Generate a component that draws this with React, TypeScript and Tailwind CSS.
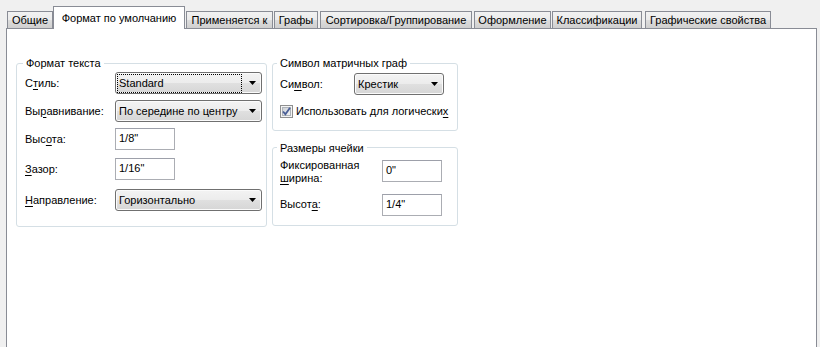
import React from "react";

const font = { fontFamily: '"Liberation Sans", Arial, sans-serif' };

function Arrow() {
  return (
    <svg width="7" height="4" viewBox="0 0 7 4" className="shrink-0">
      <path d="M0 0H7L3.5 4Z" fill="#000" />
    </svg>
  );
}

function Select({ w, text, focused }: { w: string; text: string; focused?: boolean }) {
  return (
    <div
      className={`flex h-[22px] ${w} items-center rounded-[3px] border border-[#707070] bg-[linear-gradient(#f3f3f3,#ececec_50%,#e0e0e0_50%,#d6d6d6)] pr-[5px] pl-[1px] shadow-[inset_0_0_0_1px_#fbfbfb]`}
    >
      <div className="flex flex-1 items-center">
        {focused ? (
          <span className="mr-[7px] flex h-[19px] flex-1 items-center border border-dotted border-black pl-[1px]">{text}</span>
        ) : (
          <span className="pl-[2px] whitespace-nowrap">{text}</span>
        )}
      </div>
      <Arrow />
    </div>
  );
}

function Input({ text }: { text: string }) {
  return (
    <div className="h-[22px] w-[60px] border border-[#abadb3] border-t-[#9da0aa] bg-white pl-[3px] pt-[1px] leading-[16px]">
      {text}
    </div>
  );
}

function U({ children }: { children: React.ReactNode }) {
  return <span className="underline underline-offset-[2px]">{children}</span>;
}

function Tab({ cls, children, active }: { cls: string; children: React.ReactNode; active?: boolean }) {
  if (active) {
    return (
      <div
        className={`relative z-10 -mb-px flex h-[23px] ${cls} items-start justify-center whitespace-nowrap border border-b-0 border-[#898c95] bg-white pt-[4px] leading-[14px]`}
      >
        {children}
      </div>
    );
  }
  return (
    <div
      className={`flex h-[17px] ${cls} items-center justify-center whitespace-nowrap border border-b-0 border-[#898c95] bg-[linear-gradient(#f2f2f2,#ebebeb_50%,#dddddd_50%,#cfcfcf)] leading-[14px]`}
    >
      {children}
    </div>
  );
}

export default function App() {
  return (
    <div className="h-[347px] w-[820px] overflow-hidden bg-[#f0f0f0] text-[11px] text-black" style={font}>
      <div className="flex h-[28px] items-end pl-[7px]">
        <Tab cls="w-[46px]">Общие</Tab>
        <Tab cls="w-[132px]" active>
          Формат по умолчанию
        </Tab>
        <Tab cls="ml-[1px] w-[87px]">Применяется к</Tab>
        <Tab cls="ml-[1px] w-[44px]">Графы</Tab>
        <Tab cls="ml-[2px] w-[152px]">Сортировка/Группирование</Tab>
        <Tab cls="ml-[2px] w-[77px]">Оформление</Tab>
        <Tab cls="ml-[1px] w-[90px]">Классификации</Tab>
        <Tab cls="ml-[3px] w-[126px]">Графические свойства</Tab>
      </div>
      <div className="ml-[6px] h-[330px] w-[811px] border border-[#898c95] bg-white">
        <div className="flex items-start pl-[9px] pt-[27px]">
          {/* Left group */}
          <fieldset className="w-[251px] rounded-[3px] border border-[#d5dfe5] pb-[15px] pl-[8px]">
            <legend className="-ml-[2px] px-[3px] leading-[14px]">Формат текста</legend>
            <div className="mt-[2px] flex items-center">
              <span className="w-[90px]">
                С<U>т</U>иль:
              </span>
              <Select w="w-[147px]" text="Standard" focused />
            </div>
            <div className="mt-[6px] flex items-center">
              <span className="w-[90px]">
                Вы<U>р</U>авнивание:
              </span>
              <Select w="w-[147px]" text="По середине по центру" />
            </div>
            <div className="mt-[6px] flex items-center">
              <span className="w-[90px]">
                Выс<U>о</U>та:
              </span>
              <Input text={'1/8"'} />
            </div>
            <div className="mt-[8px] flex items-center">
              <span className="w-[90px]">
                <U>З</U>азор:
              </span>
              <Input text={'1/16"'} />
            </div>
            <div className="mt-[9px] flex items-center">
              <span className="w-[90px]">
                <U>Н</U>аправление:
              </span>
              <Select w="w-[147px]" text="Горизонтально" />
            </div>
          </fieldset>

          {/* Right column */}
          <div className="ml-[5px] flex w-[186px] flex-col">
            <fieldset className="rounded-[3px] border border-[#d5dfe5] pb-[10px] pl-[7px]">
              <legend className="-ml-[3px] px-[3px] leading-[14px]">Символ матричных граф</legend>
              <div className="mt-[3px] flex items-center">
                <span className="w-[74px]">
                  Си<U>м</U>вол:
                </span>
                <Select w="w-[90px]" text="Крестик" />
              </div>
              <div className="mt-[8px] flex items-center">
                <svg width="13" height="13" viewBox="0 0 13 13" className="shrink-0">
                  <defs>
                    <linearGradient id="cbg" x1="0" y1="0" x2="1" y2="1">
                      <stop offset="0" stopColor="#cbcfd5" />
                      <stop offset="1" stopColor="#f6f6f6" />
                    </linearGradient>
                  </defs>
                  <rect x="0.5" y="0.5" width="12" height="12" fill="#f4f4f4" stroke="#8e8f8f" />
                  <rect x="2.5" y="2.5" width="8" height="8" fill="url(#cbg)" stroke="#aeb3b9" />
                  <path d="M3 6.5L5.4 9.2L10 2.8" fill="none" stroke="#4a5f97" strokeWidth="1.8" />
                </svg>
                <span className="ml-[3px] whitespace-nowrap">
                  Использовать для логически<U>х</U>
                </span>
              </div>
            </fieldset>
            <fieldset className="mt-[10px] rounded-[3px] border border-[#d5dfe5] pb-[9px] pl-[7px]">
              <legend className="-ml-[3px] px-[3px] leading-[14px]">Размеры ячейки</legend>
              <div className="mt-[5px] flex items-start">
                <span className="-mt-[1px] w-[102px] leading-[13px]">
                  Фиксированная
                  <br />
                  <U>ш</U>ирина:
                </span>
                <Input text={'0"'} />
              </div>
              <div className="mt-[9px] flex items-center">
                <span className="w-[102px]">
                  Высот<U>а</U>:
                </span>
                <Input text={'1/4"'} />
              </div>
            </fieldset>
          </div>
        </div>
      </div>
    </div>
  );
}
